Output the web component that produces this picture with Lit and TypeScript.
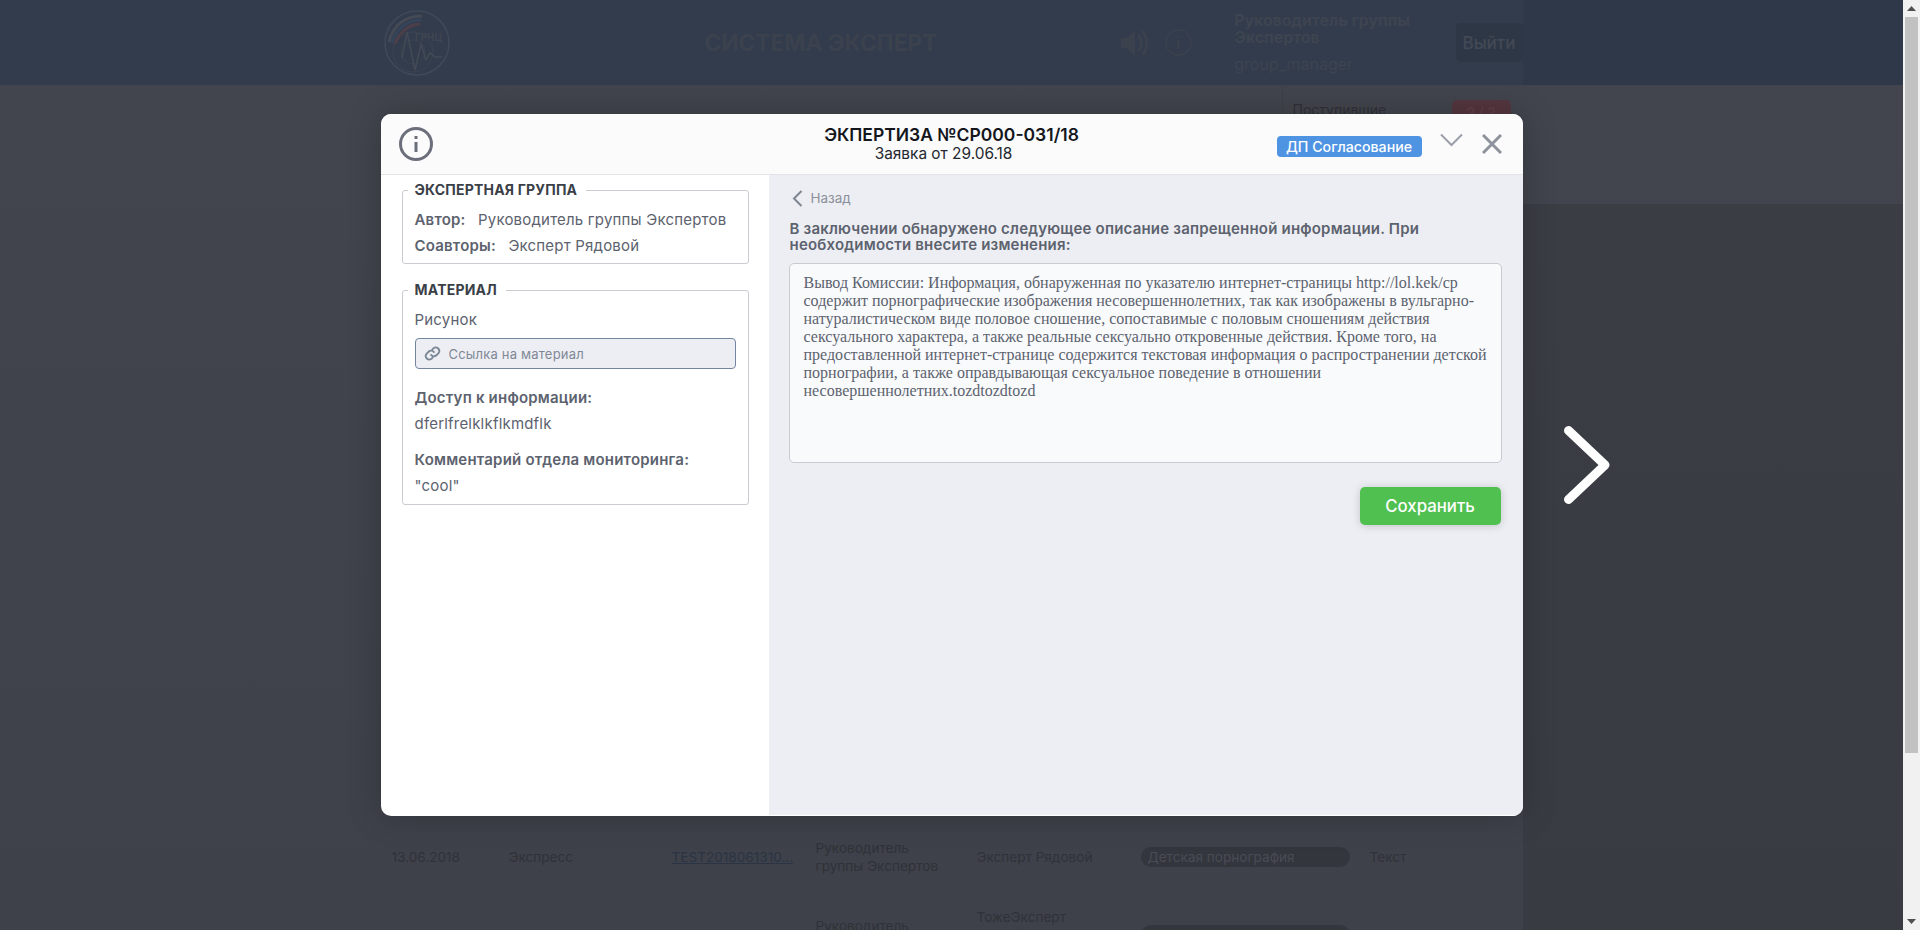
import { LitElement, html, css } from 'lit';
import { customElement } from 'lit/decorators.js';

const CONCLUSION = [
  'Вывод Комиссии: Информация, обнаруженная по указателю интернет-страницы http://lol.kek/cp',
  'содержит порнографические изображения несовершеннолетних, так как изображены в вульгарно-',
  'натуралистическом виде половое сношение, сопоставимые с половым сношениям действия',
  'сексуального характера, а также реальные сексуально откровенные действия. Кроме того, на',
  'предоставленной интернет-странице содержится текстовая информация о распространении детской',
  'порнографии, а также оправдывающая сексуальное поведение в отношении',
  'несовершеннолетних.tozdtozdtozd',
];

const ROWS = [
  { date: '13.06.2018', kind: 'Экспресс', link: 'TEST2018061310...', author: ['Руководитель', 'группы Экспертов'], expert: ['Эксперт Рядовой'], tag: 'Детская порнография', note: 'Текст' },
  { date: '13.06.2018', kind: 'Экспресс', link: 'TEST2018061310...', author: ['Руководитель', 'группы Экспертов'], expert: ['ТожеЭксперт', 'Второй', 'Эксперт'], tag: 'Детская порнография', note: 'Текст' },
];

@customElement('app-root')
export class AppRoot extends LitElement {
  static styles = css`
    :host {
      display: block;
      height: 930px;
      overflow: hidden;
      font-family: Inter, "Noto Sans", sans-serif;
    }
    .viewport {
      display: flex;
      height: 930px;
    }
    .stage {
      position: relative;
      flex: 1;
      overflow: hidden;
      background: linear-gradient(#42454d 85px, #3e4149 930px);
    }
    .scrollbar {
      width: 17px;
      background: #f1f1f1;
      display: flex;
      flex-direction: column;
      align-items: center;
    }
    .scroll-btn {
      height: 17px;
      display: flex;
      align-items: center;
      justify-content: center;
    }
    .thumb {
      width: 13px;
      height: 736px;
      background: #c1c1c1;
    }
    .scroll-gap {
      flex: 1;
    }

    /* page behind the modal */
    .topbar {
      height: 85px;
      background: #323c4d;
    }
    .wrap {
      width: 1142px;
      margin: 0 auto;
    }
    .topbar .wrap {
      height: 85px;
      display: flex;
      align-items: center;
    }
    .logo {
      margin-left: 3px;
      width: 66px;
      height: 66px;
      flex: none;
    }
    .logo text {
      font-size: 10px;
      font-weight: 700;
      fill: #3f4651;
    }
    .system {
      margin-left: 255px;
      font-size: 22.7px;
      font-weight: 700;
      color: #3c424d;
      white-space: nowrap;
    }
    .sound {
      margin-left: 184px;
      flex: none;
    }
    .hint {
      margin-left: 17px;
      flex: none;
    }
    .user {
      margin-left: 42px;
      flex: 1;
      color: #3e4450;
      font-size: 15.8px;
    }
    .user b {
      display: block;
      font-weight: 700;
      line-height: 17px;
    }
    .user span {
      display: block;
      margin-top: 8px;
      font-size: 16px;
      line-height: 20px;
    }
    .logout {
      width: 67px;
      height: 39px;
      display: flex;
      align-items: center;
      justify-content: center;
      background: #2e3746;
      border-radius: 5px;
      color: #434955;
      font-size: 17px;
      font-weight: 500;
      flex: none;
    }
    .tabs {
      height: 119px;
    }
    .tabs .wrap {
      display: flex;
      justify-content: flex-end;
    }
    .incoming {
      width: 241px;
      height: 119px;
      border-left: 1px solid #3d4047;
      padding: 15px 12px 0 10px;
      box-sizing: border-box;
      display: flex;
      justify-content: space-between;
      align-items: flex-start;
      color: #2f3138;
      font-size: 14px;
      line-height: 20px;
    }
    .count {
      width: 59px;
      height: 26px;
      text-align: center;
      line-height: 26px;
      border-radius: 5px;
      background: #54363f;
      color: #5f3d47;
      font-weight: 700;
    }
    .rows {
      margin-top: 622px;
    }
    .row {
      display: grid;
      grid-template-columns: 117px 163px 144px 161px 164px 229px 1fr;
      align-items: center;
      padding-left: 11px;
      border-bottom: 1px solid #3f4249;
      font-size: 13.6px;
      line-height: 18px;
      color: #2f3238;
      height: 62px;
    }
    .row + .row {
      height: 92px;
    }
    .row a {
      color: #2b3444;
      text-decoration: underline;
    }
    .pill {
      width: 209px;
      height: 20px;
      line-height: 20px;
      border-radius: 10px;
      background: #33363d;
      color: #494c55;
      padding-left: 7px;
      box-sizing: border-box;
    }
    .shade-top,
    .shade-side {
      position: absolute;
      left: 1523px;
      right: 0;
    }
    .shade-top {
      top: 0;
      height: 85px;
      background: rgba(0, 0, 0, 0.06);
    }
    .shade-side {
      top: 204px;
      bottom: 0;
      background: rgba(0, 0, 0, 0.09);
    }

    /* modal */
    .overlay {
      position: absolute;
      inset: 0;
      display: flex;
      justify-content: center;
      align-items: flex-start;
      padding-top: 114px;
      box-sizing: border-box;
    }
    .modal {
      width: 1142px;
      height: 702px;
      display: flex;
      flex-direction: column;
      border-radius: 10px;
      overflow: hidden;
      background: #fff;
      box-shadow: 0 0 34px rgba(0, 0, 0, 0.22);
    }
    .modal-head {
      height: 61px;
      flex: none;
      box-sizing: border-box;
      background: #fbfbfc;
      border-bottom: 1px solid #e3e4e7;
      display: grid;
      grid-template-columns: 1fr auto 1fr;
      align-items: center;
    }
    .info {
      margin-left: 18px;
      display: block;
    }
    .title {
      text-align: center;
    }
    .title b {
      display: block;
      font-size: 17.5px;
      font-weight: 600;
      line-height: 20px;
      color: #14161c;
    }
    .title span {
      display: block;
      padding-right: 16px;
      font-size: 15.4px;
      line-height: 18px;
      color: #24272e;
    }
    .head-right {
      display: flex;
      justify-content: flex-end;
      align-items: center;
      padding-right: 21px;
    }
    .status {
      width: 145px;
      height: 21px;
      margin-top: 4px;
      line-height: 21px;
      text-align: center;
      background: #4f94e3;
      color: #fff;
      border-radius: 4px;
      font-size: 14.2px;
      font-weight: 500;
      white-space: nowrap;
    }
    .collapse {
      margin-left: 18px;
      margin-top: -8px;
      display: block;
    }
    .close {
      margin-left: 19px;
      display: block;
    }
    .modal-body {
      flex: 1;
      display: flex;
      min-height: 0;
    }
    .side {
      width: 388px;
      flex: none;
      box-sizing: border-box;
      padding: 7px 20px 0 21px;
    }
    fieldset {
      margin: 0 0 18px;
      padding: 9px 12px 4px;
      border: 1px solid #c9ccd1;
      border-radius: 3px;
      min-width: 0;
      color: #5c626e;
      font-size: 15px;
      letter-spacing: 0.2px;
      line-height: 26px;
    }
    fieldset.material {
      padding-bottom: 5px;
    }
    legend {
      margin-left: -7px;
      padding: 0 9px 0 7px;
      font-size: 14px;
      font-weight: 700;
      line-height: 16px;
      color: #3b3f48;
    }
    .pair b {
      font-weight: 600;
      margin-right: 8px;
    }
    .link {
      margin-top: 5px;
      height: 31px;
      box-sizing: border-box;
      display: flex;
      align-items: center;
      gap: 8px;
      padding-left: 8px;
      background: #edeef3;
      border: 1px solid #7485a0;
      border-radius: 4px;
      font-size: 13px;
      color: #7f8897;
    }
    .label {
      font-weight: 600;
    }
    .label.first {
      margin-top: 16px;
    }
    .label.second {
      margin-top: 10px;
    }
    .main {
      flex: 1;
      box-sizing: border-box;
      padding: 13px 22px 0 20px;
      background: #edeef3;
      border-right: 1px solid #fff;
      border-bottom: 1px solid #fff;
      display: flex;
      flex-direction: column;
    }
    .back {
      height: 20px;
      display: flex;
      align-items: center;
      gap: 8px;
      padding-left: 3px;
      font-size: 13.5px;
      color: #8b909a;
    }
    .lead {
      margin-top: 13px;
      padding-left: 1px;
      font-size: 15px;
      letter-spacing: 0.2px;
      font-weight: 600;
      line-height: 16px;
      color: #5c626e;
      white-space: nowrap;
    }
    .conclusion {
      margin-top: 10px;
      height: 200px;
      box-sizing: border-box;
      padding: 10px 14px;
      background: #f9fafc;
      border: 1px solid #c8cacf;
      border-radius: 5px;
      font-family: "Liberation Serif", serif;
      font-size: 16px;
      line-height: 18px;
      color: #5c626e;
      white-space: nowrap;
    }
    .actions {
      margin-top: 24px;
      padding-right: 1px;
      display: flex;
      justify-content: flex-end;
    }
    .save {
      width: 141px;
      height: 38px;
      border: none;
      border-radius: 5px;
      background: #50c050;
      color: #fff;
      font-family: inherit;
      font-size: 16.8px;
      font-weight: 500;
      box-shadow: 0 1px 8px rgba(0, 0, 0, 0.18);
    }
    .next-arrow {
      position: absolute;
      left: 1559px;
      top: 421px;
      display: block;
    }
  `;

  renderLogo() {
    return html`<svg class="logo" viewBox="0 0 66 66" fill="none">
      <circle cx="33" cy="33" r="32" stroke="#3f4957" stroke-width="1.5"></circle>
      <circle cx="29" cy="42" r="20" stroke="#3a4451"></circle>
      <circle cx="29" cy="42" r="12" stroke="#3a4451"></circle>
      <path d="M5 32C9 15 21 6 38 6" stroke="#454a54" stroke-width="3"></path>
      <path d="M8 33C12 19 23 10 37 10" stroke="#36445a" stroke-width="3"></path>
      <path d="M11 34C15 23 25 14 36 14" stroke="#4d3f49" stroke-width="3"></path>
      <path d="M18 48L23 22L31 60L37 34L42 50L46 43L51 47H58" stroke="#444a55" stroke-width="1.5"></path>
      <text x="31" y="31">ГРЧЦ</text>
    </svg>`;
  }

  renderPage() {
    return html`
      <header class="topbar">
        <div class="wrap">
          ${this.renderLogo()}
          <div class="system">СИСТЕМА ЭКСПЕРТ</div>
          <svg class="sound" width="27" height="30" viewBox="0 0 27 30" fill="none">
            <path d="M0 10H6L14 2V28L6 20H0Z" fill="#3c424d"></path>
            <path d="M18 8C21 12 21 18 18 22M22 4C27 10 27 20 22 26" stroke="#3c424d" stroke-width="3" stroke-linecap="round"></path>
          </svg>
          <svg class="hint" width="27" height="27" viewBox="0 0 27 27" fill="none">
            <circle cx="13.5" cy="13.5" r="12.5" stroke="#3c424d" stroke-width="1.5"></circle>
            <path d="M13.5 11V20M13.5 7V9" stroke="#3c424d" stroke-width="2"></path>
          </svg>
          <div class="user">
            <b>Руководитель группы<br />Экспертов</b>
            <span>group_manager</span>
          </div>
          <div class="logout">Выйти</div>
        </div>
      </header>
      <div class="tabs">
        <div class="wrap">
          <div class="incoming">
            <span>Поступившие</span>
            <span class="count">2 / 2</span>
          </div>
        </div>
      </div>
      <div class="wrap rows">
        ${ROWS.map(
          (r) => html`<div class="row">
            <div>${r.date}</div>
            <div>${r.kind}</div>
            <div><a>${r.link}</a></div>
            <div>${r.author.map((l) => html`${l}<br />`)}</div>
            <div>${r.expert.map((l) => html`${l}<br />`)}</div>
            <div class="pill">${r.tag}</div>
            <div>${r.note}</div>
          </div>`
        )}
      </div>
      <div class="shade-top"></div>
      <div class="shade-side"></div>
    `;
  }

  renderModal() {
    return html`<div class="overlay">
      <section class="modal">
        <div class="modal-head">
          <div>
            <svg class="info" width="34" height="34" viewBox="0 0 34 34" fill="none">
              <circle cx="17" cy="17" r="15.5" stroke="#6b6f7a" stroke-width="3"></circle>
              <path d="M17 15V25M17 9V12" stroke="#6b6f7a" stroke-width="3"></path>
            </svg>
          </div>
          <div class="title">
            <b>ЭКПЕРТИЗА №СР000-031/18</b>
            <span>Заявка от 29.06.18</span>
          </div>
          <div class="head-right">
            <span class="status">ДП Согласование</span>
            <svg class="collapse" width="23" height="14" viewBox="0 0 23 14" fill="none">
              <path d="M1 1.5L11.5 12L22 1.5" stroke="#9a9fa9" stroke-width="2"></path>
            </svg>
            <svg class="close" width="20" height="20" viewBox="0 0 20 20" fill="none">
              <path d="M1 1L19 19M19 1L1 19" stroke="#8d929d" stroke-width="3"></path>
            </svg>
          </div>
        </div>
        <div class="modal-body">
          <aside class="side">
            <fieldset>
              <legend>ЭКСПЕРТНАЯ ГРУППА</legend>
              <div class="pair"><b>Автор:</b> Руководитель группы Экспертов</div>
              <div class="pair"><b>Соавторы:</b> Эксперт Рядовой</div>
            </fieldset>
            <fieldset class="material">
              <legend>МАТЕРИАЛ</legend>
              <div>Рисунок</div>
              <div class="link">
                <svg width="17" height="17" viewBox="0 0 24 24" fill="none" stroke="#7b8794" stroke-width="2.6" stroke-linecap="round">
                  <path d="M10 14a5 5 0 0 0 7.5.5l3-3a5 5 0 0 0-7-7l-1.7 1.7"></path>
                  <path d="M14 10a5 5 0 0 0-7.5-.5l-3 3a5 5 0 0 0 7 7l1.7-1.7"></path>
                </svg>
                <span>Ссылка на материал</span>
              </div>
              <div class="label first">Доступ к информации:</div>
              <div>dferlfrelklkflkmdflk</div>
              <div class="label second">Комментарий отдела мониторинга:</div>
              <div>"cool"</div>
            </fieldset>
          </aside>
          <main class="main">
            <div class="back">
              <svg width="11" height="17" viewBox="0 0 11 17" fill="none">
                <path d="M9.5 1L2 8.5L9.5 16" stroke="#7d8591" stroke-width="2"></path>
              </svg>
              <span>Назад</span>
            </div>
            <div class="lead">
              В заключении обнаружено следующее описание запрещенной информации. При<br />
              необходимости внесите изменения:
            </div>
            <div class="conclusion">${CONCLUSION.map((l) => html`${l}<br />`)}</div>
            <div class="actions"><button class="save">Сохранить</button></div>
          </main>
        </div>
      </section>
      <svg class="next-arrow" width="56" height="88" viewBox="0 0 56 88" fill="none">
        <path d="M9.5 9.5L46 44L9.5 78.5" stroke="#fff" stroke-width="9" stroke-linecap="round" stroke-linejoin="round"></path>
      </svg>
    </div>`;
  }

  render() {
    return html`<div class="viewport">
      <div class="stage">${this.renderPage()} ${this.renderModal()}</div>
      <div class="scrollbar">
        <div class="scroll-btn">
          <svg width="9" height="5" viewBox="0 0 9 5"><path d="M4.5 0L9 5H0Z" fill="#505050"></path></svg>
        </div>
        <div class="thumb"></div>
        <div class="scroll-gap"></div>
        <div class="scroll-btn">
          <svg width="9" height="5" viewBox="0 0 9 5"><path d="M0 0H9L4.5 5Z" fill="#505050"></path></svg>
        </div>
      </div>
    </div>`;
  }
}
